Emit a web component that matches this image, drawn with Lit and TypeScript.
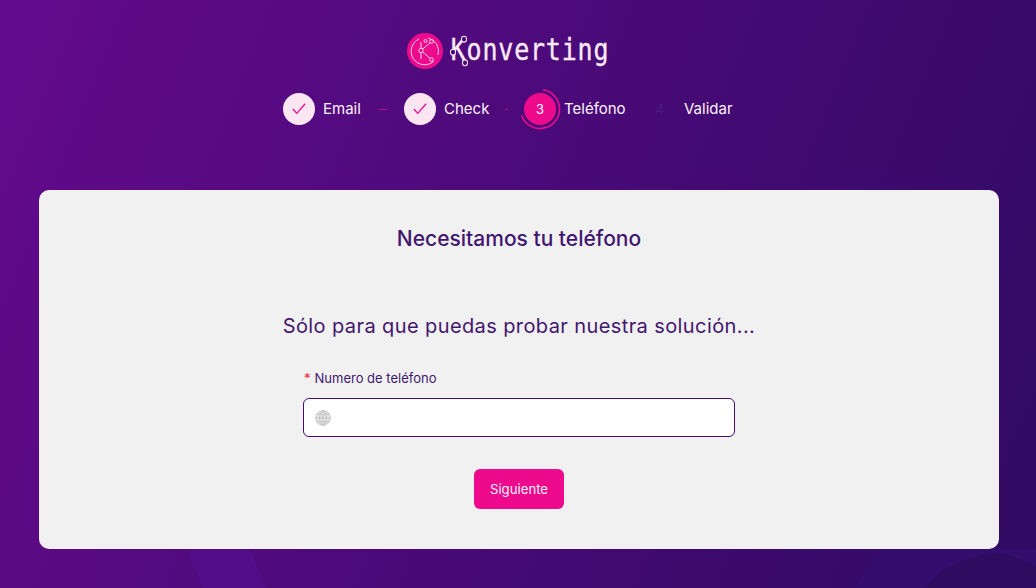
import {css, html, LitElement, nothing} from 'lit';
import {customElement} from 'lit/decorators.js';

const check = html`<svg class="check" viewBox="0 0 16 16" width="14" height="14">
  <path d="M1 8 L5.5 13 L15 2" fill="none" stroke="#ee0a8c" stroke-width="1.5" />
</svg>`;

const ring = html`<svg class="ring" viewBox="0 0 42 42" width="42" height="42">
  <path d="M24 1.7 A19.5 19.5 0 1 1 2.6 27.5" fill="none" stroke="#ee0a8c" stroke-width="1.6" />
</svg>`;

const globe = html`<svg viewBox="0 0 16 16" width="16" height="16" fill="none" stroke="#c4c4c4" stroke-width="1">
  <circle cx="8" cy="8" r="7.3" fill="#e6e6e6" />
  <ellipse cx="8" cy="8" rx="3.4" ry="7.3" />
  <path d="M8 .7V15.3M.7 8H15.3M1.8 4.3H14.2M1.8 11.7H14.2" />
</svg>`;

const mark = html`<svg viewBox="0 0 36 36" width="36" height="36" fill="none" stroke="#fbe3f1" stroke-width=".9">
  <circle cx="18" cy="18" r="18" fill="#ee0a8c" stroke="none" />
  <path d="M12 6A13.5 13.5 0 1 0 27 28" />
  <path d="M21 5A13.5 13.5 0 0 1 31 22" />
  <path d="M14 9V26M14 17.5L24 9M14 17.5L24 26" />
  <circle cx="14" cy="17.5" r="2.2" fill="#ee0a8c" />
  <circle cx="24.5" cy="8.5" r="1.8" fill="#ee0a8c" />
  <circle cx="24.5" cy="26.5" r="1.8" fill="#ee0a8c" />
  <circle cx="18.5" cy="8" r="1.5" fill="#ee0a8c" />
</svg>`;

@customElement('app-root')
export class AppRoot extends LitElement {
  static styles = css`
    :host {
      display: block;
      position: relative;
      width: 1036px;
      height: 588px;
      overflow: hidden;
      box-sizing: border-box;
      padding: 32px 37px 0 39px;
      background: linear-gradient(112deg, #640a8c 0%, #4c0a7a 45%, #2f0a62 100%);
      font-family: 'Inter', 'Lato', sans-serif;
    }
    .shapes {
      position: absolute;
      inset: 0;
    }
    .content {
      position: relative;
    }
    .logo {
      display: flex;
      justify-content: center;
      align-items: center;
      gap: 8px;
      height: 38px;
      padding-right: 22px;
    }
    .wordmark {
      position: relative;
      font: 400 25px/38px 'DejaVu Sans Mono', monospace;
      letter-spacing: 0.8px;
      color: #fbeaf5;
      -webkit-text-stroke: 0.3px #fbeaf5;
      transform: scaleY(1.18);
    }
    .node {
      position: absolute;
      width: 4px;
      height: 3.5px;
      border: 1px solid #fbeaf5;
      border-radius: 50%;
      background: #46097a;
    }
    .n1 { left: 10px; top: 6px; }
    .n2 { left: -1px; top: 17px; }
    .n3 { left: 11px; top: 26px; }
    .steps {
      display: flex;
      align-items: center;
      height: 42px;
      margin: 18px 0 0 244px;
      font-size: 15px;
      color: #fdf3fb;
    }
    .circle {
      position: relative;
      flex: none;
      display: flex;
      align-items: center;
      justify-content: center;
      width: 32px;
      height: 32px;
      border-radius: 50%;
      font-size: 13px;
    }
    .done {
      background: #fde6f2;
    }
    .active {
      background: #ee0a8c;
      color: #fff;
    }
    .waiting {
      color: #4a1a80;
    }
    .ring {
      position: absolute;
      left: -5px;
      top: -5px;
    }
    .step-label {
      margin-left: 8px;
      padding-bottom: 2px;
      white-space: nowrap;
    }
    .step-line {
      flex: none;
      height: 1px;
      background: #c00c8c;
    }
    .card {
      display: flex;
      flex-direction: column;
      align-items: center;
      box-sizing: border-box;
      width: 960px;
      height: 359px;
      margin-top: 60px;
      padding-top: 36px;
      background: #f1f1f1;
      border-radius: 10px;
      color: #42166f;
    }
    h1 {
      margin: 0;
      font-size: 21px;
      line-height: 26px;
      font-weight: 500;
      color: #42166f;
    }
    h2 {
      margin: 60px 0 0;
      font-size: 20px;
      line-height: 28px;
      font-weight: 400;
      letter-spacing: 0.4px;
      color: #42166f;
    }
    .field {
      width: 432px;
      margin-top: 29px;
    }
    label {
      display: block;
      font-size: 13px;
      line-height: 18px;
    }
    .req {
      color: #f5222d;
      margin: 0 4px 0 1px;
    }
    .input {
      display: flex;
      align-items: center;
      box-sizing: border-box;
      height: 39px;
      margin-top: 11px;
      padding-left: 11px;
      background: #fff;
      border: 1px solid #46097a;
      border-radius: 6px;
    }
    button {
      width: 90px;
      height: 40px;
      margin-top: 32px;
      padding: 0;
      border: none;
      border-radius: 6px;
      background: #ee0a8c;
      color: #fdf3fb;
      font: 400 13.2px 'Inter', 'Lato', sans-serif;
    }
  `;

  renderStep(label: string, state: string, n: number, labelWidth: number, line: number, before: number, after: number) {
    return html`
      <div class="circle ${state}">
        ${state === 'done' ? check : n}
        ${state === 'active' ? ring : nothing}
      </div>
      <span class="step-label" style="width: ${labelWidth}px">${label}</span>
      ${line
        ? html`<div class="step-line" style="width: ${line}px; margin: 0 ${after}px 0 ${before}px"></div>`
        : nothing}
    `;
  }

  render() {
    return html`
      <svg class="shapes" viewBox="0 0 1036 588" width="1036" height="588">
        <path d="M187 549 L250 549 L266 588 L203 588 Z" fill="#520d88" />
        <path d="M878 549 L855 588 H1036 V549 Z" fill="#340d6e" />
        <path d="M925 588 Q950 556 1000 553 Q1020 558 1036 566 V588 Z" fill="#2f0c60" />
      </svg>
      <div class="content">
        <div class="logo">
          ${mark}
          <div class="wordmark">
            Konverting
            <span class="node n1"></span>
            <span class="node n2"></span>
            <span class="node n3"></span>
          </div>
        </div>
        <div class="steps">
          ${this.renderStep('Email', 'done', 1, 40, 8, 16, 17)}
          ${this.renderStep('Check', 'done', 2, 46, 3, 15, 16)}
          ${this.renderStep('Teléfono', 'active', 3, 60, 0, 0, 0)}
          <div class="circle waiting" style="margin-left: 20px">4</div>
          <span class="step-label">Validar</span>
        </div>
        <div class="card">
          <h1>Necesitamos tu teléfono</h1>
          <h2>Sólo para que puedas probar nuestra solución...</h2>
          <div class="field">
            <label><span class="req">*</span>Numero de teléfono</label>
            <div class="input">${globe}</div>
          </div>
          <button>Siguiente</button>
        </div>
      </div>
    `;
  }
}
